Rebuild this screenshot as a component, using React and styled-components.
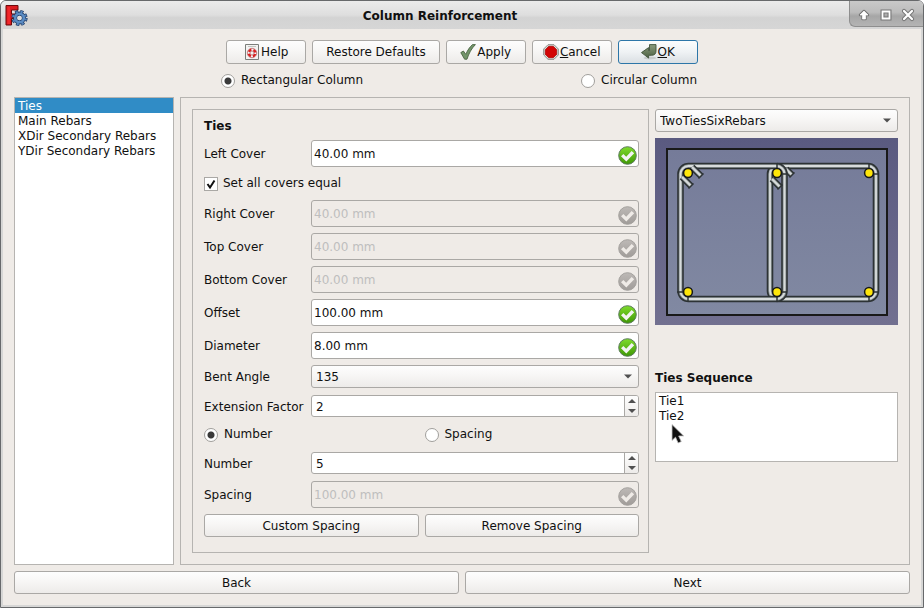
import React, { useState } from "react";
import styled, { createGlobalStyle, css } from "styled-components";

const GlobalStyle = createGlobalStyle`
  *, *::before, *::after { box-sizing: border-box; }
  body { margin: 0; background: #ffffff; }
  body, button, input, select {
    font: 12px/15px "DejaVu Sans", Verdana, sans-serif;
    color: #101010;
  }
  svg { display: block; flex: none; }
`;

const line = "#b6b4b1";
const raised = "linear-gradient(#fdfdfd, #f8f7f6 40%, #edebe9)";

const Window = styled.div`
  display: flex;
  flex-direction: column;
  min-height: 100vh;
  background: #d6d6d5;
  border: 1px solid #67696b;
  border-radius: 6px 6px 0 0;
  overflow: hidden;
`;

const TitleBar = styled.header`
  display: grid;
  grid-template-columns: 1fr auto 1fr;
  height: 28px;
  background: linear-gradient(#ebebeb, #dedede 50%, #d3d3d3 60%, #d6d6d6);
`;

const AppIcon = styled.div`
  padding: 3px 4px;
`;

const Title = styled.h1`
  margin: 0;
  font-size: 12px;
  line-height: 30px;
  padding-right: 44px;
`;

const WindowControls = styled.div`
  justify-self: end;
  display: flex;
  align-items: center;
  gap: 6px;
  width: 74px;
  height: 26px;
  padding: 2px 0 0 6px;
  border: solid #8e8e8e;
  border-width: 0 0 1px 1px;
  border-bottom-left-radius: 6px;
  background: linear-gradient(#c9c9c9, #bcbcbc 45%, #a6a6a6 60%, #b4b4b4);
`;

const ControlButton = styled.button`
  width: 16px;
  height: 20px;
  padding: 2px 0;
  border: 0;
  background: none;
`;

const Body = styled.main`
  flex: 1;
  display: flex;
  flex-direction: column;
  margin: 0 2px 2px;
  padding: 11px 11px 11px;
  background: #efebe7;
`;

const ButtonBar = styled.div`
  display: flex;
  justify-content: center;
  gap: 6px;
`;

const Button = styled.button`
  display: flex;
  align-items: center;
  justify-content: center;
  gap: 1px;
  height: 23px;
  padding: 1px 13px 0;
  border: 1px solid #aaa8a5;
  border-radius: 3px;
  background: ${raised};
  ${(p) =>
    p.$tool &&
    css`
      height: 24px;
      min-width: 80px;
      &:has(svg) { padding: 0 8px; }
    `}
  ${(p) => p.$wide && css`flex: 1;`}
  ${(p) =>
    p.$primary &&
    css`
      border-color: #2d76a8;
      background: linear-gradient(#fcfdfd, #eff2f4 50%, #dadfe3);
    `}
`;

const ShapeBar = styled.div`
  display: flex;
  justify-content: center;
  gap: 218px;
  padding: 9px 6px 9px 0;
`;

const CheckLabel = styled.label`
  display: flex;
  align-items: center;
  gap: 6px;
  white-space: nowrap;
`;

const Radio = styled.input.attrs({ type: "radio" })`
  appearance: none;
  width: 14px;
  height: 14px;
  margin: 0;
  border: 1px solid #a19f9c;
  border-radius: 50%;
  background: #ffffff;
  &:checked {
    background: radial-gradient(circle, #3a3a3a 0 3px, #ffffff 4px);
  }
`;

const TickBox = styled.span`
  display: grid;
  width: 14px;
  height: 14px;
  margin-right: -1px;
  & > * { grid-area: 1 / 1; }
  svg { pointer-events: none; }
`;

const Checkbox = styled.input.attrs({ type: "checkbox" })`
  appearance: none;
  width: 14px;
  height: 14px;
  margin: 0;
  border: 1px solid #aaa8a5;
  background: #ffffff;
  &:not(:checked) + svg { visibility: hidden; }
`;

const Columns = styled.div`
  flex: 1;
  display: grid;
  grid-template-columns: 160px 1fr;
  gap: 6px;
`;

const List = styled.ul`
  margin: 0;
  padding: 0;
  list-style: none;
  border: 1px solid ${line};
  background: #ffffff;
  ${(p) =>
    p.$short &&
    css`
      position: relative;
      height: 70px;
      margin-top: 6px;
    `}
`;

const ListItem = styled.li`
  height: 15px;
  padding: 0 3px;
  line-height: 17px;
  ${(p) => p.$selected && css`background: #308cc6; color: #ffffff;`}
`;

const Panel = styled.section`
  display: grid;
  grid-template-columns: 1fr 243px;
  gap: 6px;
  padding: 11px;
  border: 1px solid ${line};
`;

const Form = styled.form`
  display: flex;
  flex-direction: column;
  gap: 6px;
  padding: 9px 9px 15px 11px;
  border: 1px solid ${line};
`;

const Heading = styled.h2`
  margin: 0;
  font-size: 12px;
  line-height: 15px;
`;

const Row = styled.div`
  display: grid;
  grid-template-columns: ${(p) => (p.$halves ? "1fr 1fr" : "101px 1fr")};
  gap: 6px;
  align-items: center;
  min-height: ${(p) => p.$height}px;
  white-space: nowrap;
`;

const FieldLabel = styled.label`
  padding-top: 2px;
`;

const Field = styled.div`
  display: flex;
  align-items: center;
  height: ${(p) => p.$height || 27}px;
  border: 1px solid #aaa8a5;
  border-radius: 3px;
  background: ${(p) => (p.$disabled ? "#efebe7" : "#ffffff")};
  overflow: hidden;
`;

const Input = styled.input`
  flex: 1;
  min-width: 0;
  height: 100%;
  padding: 0 2px;
  border: 0;
  outline: 0;
  background: transparent;
  appearance: textfield;
  &::-webkit-inner-spin-button { display: none; }
  &:disabled { color: #bebebe; }
  ${(p) => p.$inset && css`padding: 2px 2px 0 4px;`}
`;

const StatusIcon = styled.svg`
  width: 19px;
  height: 19px;
  margin: 4px 1px 0 0;
`;

const Stepper = styled.div`
  display: flex;
  flex-direction: column;
  width: 14px;
  height: 100%;
  border-left: 1px solid #aaa8a5;
  background: ${raised};
`;

const StepButton = styled.button`
  flex: 1;
  display: grid;
  place-items: center;
  padding: 0;
  border: 0;
  background: none;
`;

const SelectBox = styled.div`
  display: grid;
  align-items: center;
  & > * { grid-area: 1 / 1; }
  & > svg {
    justify-self: end;
    margin-right: 7px;
    pointer-events: none;
  }
`;

const Select = styled.select`
  appearance: none;
  width: 100%;
  height: 23px;
  padding: 2px 20px 0 4px;
  border: 1px solid #aaa8a5;
  border-radius: 3px;
  background: ${raised};
`;

const Side = styled.aside`
  display: flex;
  flex-direction: column;
`;

const Diagram = styled.svg`
  width: 100%;
  margin: 6px 0 46px;
`;

const Pointer = styled.li`
  position: absolute;
  left: 15px;
  top: 31px;
`;

const Footer = styled.footer`
  display: flex;
  gap: 6px;
  margin-top: 6px;
`;

const FreeCadIcon = () => (
  <svg width="23" height="23" viewBox="0 0 23 23">
    <path d="M1 1.500h12v4.500H6.500v4h4.500v4.500H6.500v6.500H1z" fill="#dc1b20" stroke="#6e090b" />
    <path d="M2.500 3h2.500v17H2.500z" fill="#f0282b" />
    <circle cx="14.500" cy="14" r="6.300" fill="none" stroke="#223d67" strokeWidth="3.600" strokeDasharray="3 1.948" />
    <circle cx="14.500" cy="14" r="4.300" fill="none" stroke="#223d67" strokeWidth="4.200" />
    <circle cx="14.500" cy="14" r="6.300" fill="none" stroke="#5585bd" strokeWidth="2.200" strokeDasharray="1.900 3.048" strokeDashoffset="-.5" />
    <circle cx="14.500" cy="14" r="4.300" fill="none" stroke="#5b8cc4" strokeWidth="2.600" />
    <circle cx="14.500" cy="14" r="2.300" fill="#dedede" />
  </svg>
);

const ShadeIcon = () => (
  <svg width="16" height="16" viewBox="0 0 16 16">
    <path d="M8 4 12 8H9.500v4h-3V8H4z" fill="#fff" stroke="#777" strokeWidth="2.500" strokeLinejoin="round" />
    <path d="M8 4 12 8H9.500v4h-3V8H4z" fill="#fff" stroke="#fff" strokeWidth=".7" />
  </svg>
);

const MaximizeIcon = () => (
  <svg width="16" height="16" viewBox="0 0 16 16">
    <path d="M4.500 4.500h7v7h-7z" fill="none" stroke="#777" strokeWidth="4" />
    <path d="M4.500 4.500h7v7h-7z" fill="none" stroke="#fff" strokeWidth="1.800" />
  </svg>
);

const CloseIcon = () => (
  <svg width="16" height="16" viewBox="0 0 16 16">
    <path d="m4 4 8 8M12 4l-8 8" fill="none" stroke="#777" strokeWidth="4.200" strokeLinecap="round" />
    <path d="m4 4 8 8M12 4l-8 8" fill="none" stroke="#fff" strokeWidth="2.200" strokeLinecap="round" />
  </svg>
);

const HelpIcon = () => (
  <svg width="16" height="16" viewBox="0 0 16 16">
    <path d="M1.500.5h13v15h-13z" fill="#f3f3f2" stroke="#7b7e7a" />
    <path d="M4 2.500h8" stroke="#c3c5c1" />
    <circle cx="8" cy="9" r="3.500" fill="none" stroke="#f4f4f4" strokeWidth="3" />
    <circle cx="8" cy="9" r="3.400" fill="none" stroke="#dd2020" strokeWidth="2.200" strokeDasharray="3.200 2.140" strokeDashoffset="-1.070" />
    <circle cx="8" cy="9" r="4.700" fill="none" stroke="#a33" strokeWidth=".6" />
    <circle cx="8" cy="9" r="2" fill="none" stroke="#a33" strokeWidth=".6" />
  </svg>
);

const ApplyIcon = () => (
  <svg width="16" height="16" viewBox="0 0 16 16">
    <path d="M.8 8.600 3.400 7l2.400 3.400C7.600 6 10 2.800 12.500.6h2.900C11.500 4.500 8.800 9.500 7 15.200H4.600z" fill="#73956a" stroke="#4c6544" strokeWidth=".9" strokeLinejoin="round" />
  </svg>
);

const CancelIcon = () => (
  <svg width="16" height="16" viewBox="0 0 16 16">
    <path d="M5 .7h6L15.300 5v6L11 15.300H5L.7 11V5z" fill="#dddedb" stroke="#7f827d" strokeWidth=".9" />
    <path d="M5.700 2.300h4.600l3.400 3.400v4.600l-3.400 3.400H5.700l-3.400-3.400V5.700z" fill="#d20505" stroke="#a80000" strokeWidth=".7" />
  </svg>
);

const OkIcon = () => (
  <svg width="16" height="16" viewBox="0 0 16 16">
    <defs>
      <linearGradient id="return-fill" x1="0" y1="0" x2="0" y2="1">
        <stop offset="0" stopColor="#8b9b7d" />
        <stop offset="1" stopColor="#4c6143" />
      </linearGradient>
    </defs>
    <ellipse cx="9" cy="14" rx="6.500" ry="1.500" fill="#c7cbcc" />
    <path d="M8.500.6h6.500v6.400c0 2.800-1.600 4.300-4.300 4.300H7.600v2.800L.5 8.600l7.100-5v3h.9z" fill="url(#return-fill)" stroke="#40513a" strokeWidth=".9" strokeLinejoin="round" />
  </svg>
);

const CaretDown = () => (
  <svg width="8" height="5" viewBox="0 0 8 5">
    <path d="M0 .5h8L4 4.500z" fill="#505050" />
  </svg>
);

const StepArrow = ({ up }) => (
  <svg width="8" height="4" viewBox="0 0 8 4">
    <path d={up ? "M0 4h8L4 0z" : "M0 0h8L4 4z"} fill="#505050" />
  </svg>
);

const Status = ({ disabled }) => (
  <StatusIcon viewBox="0 0 19 19">
    <defs>
      <linearGradient id="status-on" x1="0" y1="0" x2="0" y2="1">
        <stop offset="0" stopColor="#7fdc2c" />
        <stop offset="1" stopColor="#3f9706" />
      </linearGradient>
      <linearGradient id="status-off" x1="0" y1="0" x2="0" y2="1">
        <stop offset="0" stopColor="#bdb9b6" />
        <stop offset="1" stopColor="#a09c99" />
      </linearGradient>
    </defs>
    <circle cx="9.500" cy="9.500" r="8.800" fill={disabled ? "url(#status-off)" : "url(#status-on)"} stroke={disabled ? "#a3a09d" : "#5b7a5b"} />
    <path d="m3 10.200 2.400-2.200 2.800 2.700 5.400-5.800 2.600 2.400-7.900 8.300z" fill={disabled ? "#efebe7" : "#f3f3f3"} />
  </StatusIcon>
);

const mainRebars = [
  [33, 35], [122, 35], [214, 35],
  [33, 154], [122, 154], [214, 154],
];

const Bar = ({ d }) => (
  <g fill="none">
    <path d={d} stroke="#2d3335" strokeWidth="6.600" />
    <path d={d} stroke="#8f9798" strokeWidth="3.400" />
    <path d={d} stroke="#d8dcdc" strokeWidth="1.800" />
  </g>
);

const TieDiagram = () => (
  <Diagram viewBox="0 0 243 187" role="img" aria-label="Two ties with six rebars">
    <defs>
      <linearGradient id="backdrop" x1="0" y1="0" x2="0" y2="1">
        <stop offset="0" stopColor="#5a5a80" />
        <stop offset="1" stopColor="#727090" />
      </linearGradient>
      <linearGradient id="concrete" x1="0" y1="0" x2="0" y2="1">
        <stop offset="0" stopColor="#757b99" />
        <stop offset="1" stopColor="#8189a2" />
      </linearGradient>
    </defs>
    <path d="M0 0h243v187H0z" fill="url(#backdrop)" />
    <path d="M12 11h220v166H12z" fill="url(#concrete)" stroke="#191919" strokeWidth="2" />
    <Bar d="M122 28H213a8 8 0 0 1 8 8V153a8 8 0 0 1-8 8H123a8 8 0 0 1-8-8V36a8 8 0 0 1 8-8z" />
    <Bar d="M131 31l6 6M117 41l8 8" />
    <Bar d="M33.500 28H121.500a8 8 0 0 1 8 8V153a8 8 0 0 1-8 8H33.500a8 8 0 0 1-8-8V36a8 8 0 0 1 8-8z" />
    <Bar d="M37 29l9 9M27 39l9 9" />
    <path d="M43.500 40.500l5-5M33.500 50.500l5-5M122.500 51.500l5-5M134.500 39.500l5-5" stroke="#2d3335" strokeWidth="1.500" />
    <path d="M122 25v6M126 36h6M214 25v6M218 36h6M22 154h6M33 158v6M126 154h6M122 158v6M218 154h6M214 158v6" stroke="#2d3335" strokeWidth="1.500" />
    {mainRebars.map(([x, y]) => (
      <circle key={`${x}-${y}`} cx={x} cy={y} r="4.400" fill="#ffe60a" stroke="#16181a" strokeWidth="1.500" />
    ))}
  </Diagram>
);

const UnitRow = ({ id, label, value, disabled }) => (
  <Row $height={27}>
    <FieldLabel htmlFor={id}>{label}</FieldLabel>
    <Field $disabled={disabled}>
      <Input id={id} defaultValue={value} disabled={disabled} />
      <Status disabled={disabled} />
    </Field>
  </Row>
);

const SpinRow = ({ id, label, value }) => {
  const [count, setCount] = useState(value);
  return (
    <Row $height={24}>
      <FieldLabel htmlFor={id}>{label}</FieldLabel>
      <Field $height={22}>
        <Input id={id} type="number" $inset value={count} onChange={(e) => setCount(Number(e.target.value))} />
        <Stepper>
          <StepButton type="button" aria-label={`Increase ${label}`} onClick={() => setCount(count + 1)}>
            <StepArrow up />
          </StepButton>
          <StepButton type="button" aria-label={`Decrease ${label}`} onClick={() => setCount(count - 1)}>
            <StepArrow />
          </StepButton>
        </Stepper>
      </Field>
    </Row>
  );
};

const pages = ["Ties", "Main Rebars", "XDir Secondary Rebars", "YDir Secondary Rebars"];

export default function App() {
  return (
    <Window>
      <GlobalStyle />
      <TitleBar>
        <AppIcon><FreeCadIcon /></AppIcon>
        <Title>Column Reinforcement</Title>
        <WindowControls>
          <ControlButton aria-label="Shade"><ShadeIcon /></ControlButton>
          <ControlButton aria-label="Maximize"><MaximizeIcon /></ControlButton>
          <ControlButton aria-label="Close"><CloseIcon /></ControlButton>
        </WindowControls>
      </TitleBar>
      <Body>
        <ButtonBar>
          <Button $tool><HelpIcon />Help</Button>
          <Button $tool>Restore Defaults</Button>
          <Button $tool><ApplyIcon />Apply</Button>
          <Button $tool><CancelIcon /><span><u>C</u>ancel</span></Button>
          <Button $tool $primary><OkIcon /><span><u>O</u>K</span></Button>
        </ButtonBar>
        <ShapeBar>
          <CheckLabel><Radio name="shape" defaultChecked />Rectangular Column</CheckLabel>
          <CheckLabel><Radio name="shape" />Circular Column</CheckLabel>
        </ShapeBar>
        <Columns>
          <List>
            {pages.map((page, i) => (
              <ListItem key={page} $selected={i === 0}>{page}</ListItem>
            ))}
          </List>
          <Panel>
            <Form>
              <Heading>Ties</Heading>
              <UnitRow id="left-cover" label="Left Cover" value="40.00 mm" />
              <Row $height={21}>
                <CheckLabel>
                  <TickBox>
                    <Checkbox defaultChecked />
                    <svg width="14" height="14" viewBox="0 0 14 14">
                      <path d="M3.500 7 6 10.500 10.500 3.500" fill="none" stroke="#111" strokeWidth="2" />
                    </svg>
                  </TickBox>
                  Set all covers equal
                </CheckLabel>
              </Row>
              <UnitRow id="right-cover" label="Right Cover" value="40.00 mm" disabled />
              <UnitRow id="top-cover" label="Top Cover" value="40.00 mm" disabled />
              <UnitRow id="bottom-cover" label="Bottom Cover" value="40.00 mm" disabled />
              <UnitRow id="offset" label="Offset" value="100.00 mm" />
              <UnitRow id="diameter" label="Diameter" value="8.00 mm" />
              <Row $height={23}>
                <FieldLabel htmlFor="bent-angle">Bent Angle</FieldLabel>
                <SelectBox>
                  <Select id="bent-angle" defaultValue="135">
                    <option>135</option>
                    <option>90</option>
                  </Select>
                  <CaretDown />
                </SelectBox>
              </Row>
              <SpinRow id="extension" label="Extension Factor" value={2} />
              <Row $halves $height={21}>
                <CheckLabel><Radio name="layout" defaultChecked />Number</CheckLabel>
                <CheckLabel><Radio name="layout" />Spacing</CheckLabel>
              </Row>
              <SpinRow id="number" label="Number" value={5} />
              <UnitRow id="spacing" label="Spacing" value="100.00 mm" disabled />
              <Row $halves $height={23}>
                <Button type="button">Custom Spacing</Button>
                <Button type="button">Remove Spacing</Button>
              </Row>
            </Form>
            <Side>
              <SelectBox>
                <Select aria-label="Rebar configuration" defaultValue="TwoTiesSixRebars">
                  <option>TwoTiesSixRebars</option>
                </Select>
                <CaretDown />
              </SelectBox>
              <TieDiagram />
              <Heading>Ties Sequence</Heading>
              <List $short>
                <ListItem>Tie1</ListItem>
                <ListItem>Tie2</ListItem>
                <Pointer aria-hidden="true">
                  <svg width="15" height="20" viewBox="0 0 15 20">
                    <path d="M1 .5v16l3.500-3.300 2.600 5.800 3.200-1.400-2.600-5.600h5z" fill="#111" stroke="#c4c4c4" strokeWidth=".8" />
                  </svg>
                </Pointer>
              </List>
            </Side>
          </Panel>
        </Columns>
        <Footer>
          <Button $wide>Back</Button>
          <Button $wide>Next</Button>
        </Footer>
      </Body>
    </Window>
  );
}
